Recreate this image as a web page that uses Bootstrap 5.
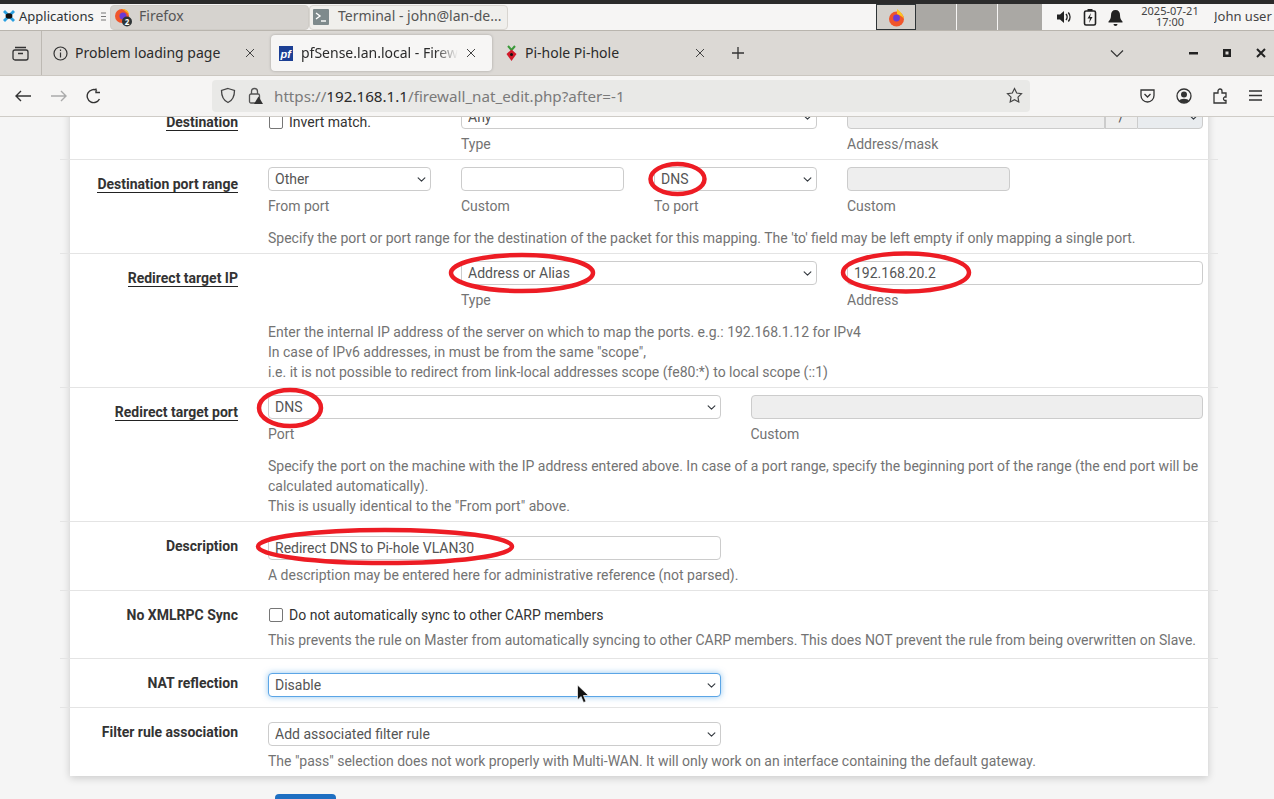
<!DOCTYPE html>
<html lang="en"><head><meta charset="utf-8"><title>pfSense</title>
<link href="https://cdn.jsdelivr.net/npm/bootstrap@5.3.0/dist/css/bootstrap.min.css" rel="stylesheet">
<style>
html,body{height:799px;overflow:hidden;background:#f5f5f5}
body{font-family:Roboto,sans-serif;font-size:14px;line-height:20px;color:#333}
.blackbar{height:4px;background:#2b2b2b}
.panel{height:27px;background:#f6f5f4;border-bottom:1px solid #b9b5ae;font-family:"Noto Sans",sans-serif;font-size:13px;color:#2e3436}
.up{margin-top:-2px}
.appmenu{width:110px;padding-left:2px;gap:3px}
.winbtn{width:199px;height:25px;border-radius:4px;padding-left:3px;gap:5px;color:#555;font-size:14px}
.winbtn.on{background:#d6d3cf;border:1px solid #cfccc7}
.winbtn.off{background:#f0efec;border:1px solid #d8d5d0;gap:9px}
.ws{width:41px;height:26px;background:#aaa8a4;border-right:1px solid #f6f5f4}
.ws.cur{width:40px;background:#d3d0cb;border:1px solid #2e3436}
.clock{font-size:11px;line-height:11px;text-align:center;width:70px;margin-left:12px;color:#444}
.uname{margin-left:9px;white-space:nowrap;width:60px;overflow:hidden;color:#444}
.tabbar{height:45px;background:#dcd9d5;border-bottom:1px solid #cbc7c1;font-family:"Noto Sans",sans-serif;font-size:14px;color:#2b2b2b}
.tabside{width:42px;height:44px;border-right:1px solid #bdb9b3}
.ftab{width:226px;height:36px;padding:0 13px 0 11px;gap:7px;white-space:nowrap}
.ftab.cur{background:#f7f6f5;border-radius:4px;box-shadow:0 0 3px rgba(0,0,0,.25);width:221px;padding:0 16px 0 8px;margin-left:3px;gap:8px}
.ftab.third{width:222px;padding:0 9px 0 13px}
.ftab .tt{flex:1;overflow:hidden}
.fade-tt{-webkit-mask-image:linear-gradient(90deg,#000 85%,transparent);mask-image:linear-gradient(90deg,#000 85%,transparent)}
.navrow{height:41px;padding-bottom:1px;background:#f6f5f4;border-bottom:1px solid #cfccc7}
.urlbox{width:818px;height:32px;background:#e9e9e7;border-radius:4px;font-family:"Noto Sans",sans-serif;font-size:15.2px;color:#7a7a7a;padding:0 7px 0 8px}
.urlbox b{font-weight:400;color:#2b2b2b}
.navl{width:212px;padding-left:14px;gap:18px}
.navr{margin-left:110px;gap:21px}
.stage{height:682px;overflow:hidden}
.sheet{width:1138px;margin:-19px 0 0 70px;padding:0 5px;background:#fff;box-shadow:0 2px 8px rgba(0,0,0,.18)}
.frow{--bs-gutter-x:30px;border-bottom:1px solid #e4e4e4}
.frow.last{border-bottom:0}
.lab{padding-top:14px;text-align:right;font-weight:700;color:#333}
.lab span{border-bottom:1px solid #222}
.lab span.plain{border:0}
.pt7{padding-top:7px}.pt14{padding-top:14px}
.pb5{padding-bottom:5px}
.pb8{padding-bottom:8px}
.ctl.form-select,.ctl.form-control{height:24px;min-height:24px;padding:0 16px 0 6px;font-size:14px;line-height:22px;color:#555;border:1px solid #ccc;border-radius:4px;font-family:Roboto,sans-serif;box-shadow:none}
.ctl.form-select{background-position:right 3px center;background-size:11px 9px}
.ctl.form-control:disabled{background:#eee}
.ctl.focused{border-color:#5ba5e6!important;box-shadow:0 0 6px rgba(102,175,233,.7)!important}
.hint{color:#737373}
.sub{margin-top:5px;color:#737373}
.mt12{margin-top:12px}
.mt5{margin-top:5px}
.pad10{padding-bottom:10px}
.chk.form-check-input{width:14px;height:14px;margin:0 6px 0 1px;border:1.5px solid #767676;border-radius:2px;vertical-align:-2px}
.slash{flex:none;width:32px;height:24px;background:#eee;border:1px solid #ccc;border-width:1px 0;text-align:center;color:#555;line-height:22px;border-left:1px solid #ccc}
.addr{border-radius:4px 0 0 4px!important}
.mask{border-radius:0 4px 4px 0!important;width:66px;flex:none;background-color:#eee}
.savebtn{width:61px;height:20px;margin:18px 0 0 275px;background:#1e6fc2;border-radius:4px 4px 0 0}
.overlay{left:0;top:0;pointer-events:none}
</style></head>
<body>
<div class="blackbar"></div>
<div class="panel d-flex align-items-center">
 <div class="appmenu d-flex align-items-center">
  <svg class="up" width="14" height="14" viewBox="0 0 14 14"><path d="M1 3 3 1 7 5 11 1 13 3 9 7 13 11 11 13 7 9 3 13 1 11 5 7Z" fill="#2a9fe0"/><ellipse cx="7" cy="7" rx="3.4" ry="2.8" fill="#111"/></svg>
  <span class="up">Applications</span>
  <svg class="up ms-1" width="5" height="9" viewBox="0 0 5 9" stroke="#777"><path d="M0 1h5M0 4.500h5M0 8h5"/></svg>
 </div>
 <div class="winbtn on d-flex align-items-center">
  <svg width="20" height="22" viewBox="0 0 20 22"><circle cx="8" cy="10" r="7" fill="#f0552b"/><circle cx="9" cy="10" r="3.500" fill="#6a3bd6"/><path d="M8 3c4 0 7 2 7 6-2-3-4-4-7-6Z" fill="#fdb51f"/><circle cx="13" cy="15.500" r="5" fill="#2e3436"/><text x="13" y="18.500" font-size="8" fill="#fff" text-anchor="middle" font-weight="700">2</text></svg>
  <span class="up">Firefox</span>
 </div>
 <div class="winbtn off d-flex align-items-center">
  <svg width="16" height="16" viewBox="0 0 16 16"><rect width="16" height="16" rx="1" fill="#7e8a8c"/><path d="M3 4 7 7 3 10" fill="none" stroke="#fff" stroke-width="1.400"/><path d="M8 12h5" stroke="#fff" stroke-width="1.400"/></svg>
  <span class="up">Terminal - john@lan-de...</span>
 </div>
 <div class="d-flex" style="margin-left:368px">
  <div class="ws cur d-flex align-items-center justify-content-center"><svg width="17" height="19" viewBox="0 0 17 19"><circle cx="8.500" cy="11" r="7.500" fill="#f0552b"/><circle cx="8.500" cy="10" r="3.400" fill="#6a3bd6"/><path d="M9 1c3 2 6 5 7 10-2-3-5-4-7-5Z" fill="#fdc51f"/></svg></div>
  <div class="ws"></div><div class="ws"></div><div class="ws" style="border:0;width:44px"></div>
 </div>
 <div class="d-flex align-items-center" style="margin-left:14px;gap:11px">
  <svg width="16" height="16" viewBox="0 0 16 16"><path d="M1 5.500h3L8 2v12L4 10.500H1Z" fill="#222"/><path d="M10 5c1.400 1.600 1.400 4.400 0 6M12.300 3.500c2.200 2.600 2.200 6.400 0 9" fill="none" stroke="#222" stroke-width="1.500"/></svg>
  <svg width="14" height="18" viewBox="0 0 14 18"><rect x="1.500" y="3" width="11" height="14" rx="1.500" fill="none" stroke="#222" stroke-width="1.600"/><rect x="4.500" y="1" width="5" height="2" fill="#222"/><path d="M8 5 4.500 10.500H7L6 15l3.500-6H7Z" fill="#222"/></svg>
  <svg width="15" height="17" viewBox="0 0 15 17"><path d="M7.500 1c-3 0-4.500 2-4.500 5 0 3.500-1 5-2.500 6.500v1h14v-1C13 11 12 9.500 12 6c0-3-1.500-5-4.500-5Z" fill="#222"/><path d="M5.500 15a2 2 0 0 0 4 0Z" fill="#222"/></svg>
 </div>
 <div class="clock up">2025-07-21<br>17:00</div>
 <div class="uname up">John user</div>
</div>
<div class="tabbar d-flex align-items-center">
 <div class="tabside d-flex align-items-center justify-content-center"><svg width="17" height="16" viewBox="0 0 17 16" fill="none" stroke="#333" stroke-width="1.300"><rect x="1" y="5" width="15" height="10" rx="2"/><path d="M3 2.500h11M6 8.500h5"/></svg></div>
 <div class="ftab d-flex align-items-center">
  <svg width="15" height="15" viewBox="0 0 15 15" fill="none" stroke="#333" stroke-width="1.200"><circle cx="7.500" cy="7.500" r="6.500"/><path d="M7.500 6.500v5M7.500 3.500v1.500"/></svg>
  <span class="tt">Problem loading page</span>
  <svg width="10" height="10" viewBox="0 0 10 10" stroke="#444"><path d="M1 1l8 8M9 1l-8 8"/></svg>
 </div>
 <div class="ftab cur d-flex align-items-center">
  <svg width="14" height="15" viewBox="0 0 14 15"><rect width="14" height="15" fill="#1c3f94"/><text x="1.500" y="12" font-size="11" font-weight="700" font-style="italic" fill="#fff" font-family="Liberation Sans">pf</text></svg>
  <span class="tt fade-tt">pfSense.lan.local - Firewall: NAT</span>
  <svg width="10" height="10" viewBox="0 0 10 10" stroke="#444"><path d="M1 1l8 8M9 1l-8 8"/></svg>
 </div>
 <div class="ftab third d-flex align-items-center">
  <svg width="13" height="17" viewBox="0 0 13 17"><path d="M6.500 5 3 1M6.500 5 10 1" stroke="#3a9a3a" stroke-width="2"/><path d="M6.500 4.500 11.500 9 6.500 16 1.500 9Z" fill="#d11a2a"/><circle cx="6.500" cy="9.500" r="1.500" fill="#111"/></svg>
  <span class="tt">Pi-hole Pi-hole</span>
  <svg width="10" height="10" viewBox="0 0 10 10" stroke="#444"><path d="M1 1l8 8M9 1l-8 8"/></svg>
 </div>
 <svg style="margin-left:17px" width="14" height="14" viewBox="0 0 14 14" stroke="#333" stroke-width="1.300"><path d="M7 1v12M1 7h12"/></svg>
 <svg style="margin-left:365px" width="14" height="9" viewBox="0 0 14 9" fill="none" stroke="#333" stroke-width="1.200"><path d="M1 1.500 7 7.500 13 1.500"/></svg>
 <svg style="margin-left:65px" width="9" height="3" viewBox="0 0 9 3"><rect width="9" height="2.500" fill="#222"/></svg>
 <svg style="margin-left:25px" width="8" height="8" viewBox="0 0 8 8"><path d="M0 0h8v8H0Z M2.500 2.500v3h3v-3Z" fill="#222" fill-rule="evenodd"/></svg>
 <svg style="margin-left:25px" width="10" height="10" viewBox="0 0 10 10" stroke="#222" stroke-width="2"><path d="M1 1l8 8M9 1l-8 8"/></svg>
</div>
<div class="navrow d-flex align-items-center">
 <div class="navl d-flex align-items-center">
  <svg width="18" height="14" viewBox="0 0 18 14" fill="none" stroke="#333" stroke-width="1.400"><path d="M17 7H2M7 2 2 7l5 5"/></svg>
  <svg width="18" height="14" viewBox="0 0 18 14" fill="none" stroke="#aaa" stroke-width="1.400"><path d="M1 7h15M11 2l5 5-5 5"/></svg>
  <svg width="16" height="16" viewBox="0 0 16 16" fill="none" stroke="#333" stroke-width="1.400"><path d="M13.500 11A6.500 6.500 0 1 1 11 2.500M10 .5v4h4"/></svg>
 </div>
 <div class="urlbox d-flex align-items-center">
  <svg width="16" height="17" viewBox="0 0 16 17" fill="none" stroke="#444" stroke-width="1.300"><path d="M8 1.500 14.500 3.500c0 6-2 10-6.500 12C3.500 13.500 1.500 9.500 1.500 3.500Z"/></svg>
  <svg style="margin-left:12px" width="15" height="17" viewBox="0 0 15 17"><rect x="1.500" y="7" width="10" height="9" rx="1.500" fill="none" stroke="#555" stroke-width="1.300"/><path d="M3.500 7V4.500a3 3 0 0 1 6 0V7" fill="none" stroke="#555" stroke-width="1.300"/><path d="M10.500 9.500 15 17H6Z" fill="#333"/></svg>
  <span class="flex-grow-1" style="margin-left:11px">https://<b>192.168.1.1</b>/firewall_nat_edit.php?after=-1</span>
  <svg width="17" height="17" viewBox="0 0 17 17" fill="none" stroke="#444" stroke-width="1.200"><path d="M8.500 1.500 10.700 6l4.800.7-3.500 3.400.8 4.900-4.300-2.300L4.200 15l.8-4.900L1.500 6.700 6.300 6Z"/></svg>
 </div>
 <div class="navr d-flex align-items-center">
  <svg width="15" height="14" viewBox="0 0 15 14" fill="none" stroke="#333" stroke-width="1.300"><path d="M1 1h13v5.500a6.500 6.500 0 0 1-13 0Z"/><path d="M4.500 5 7.500 8l3-3"/></svg>
  <svg width="16" height="16" viewBox="0 0 16 16"><circle cx="8" cy="8" r="7" fill="none" stroke="#333" stroke-width="1.300"/><circle cx="8" cy="6.500" r="3" fill="#333"/><path d="M3 13c1-3 9-3 10 0a7 7 0 0 1-10 0Z" fill="#333"/></svg>
  <svg width="15" height="16" viewBox="0 0 15 16" fill="none" stroke="#333" stroke-width="1.300"><path d="M1 5h4V3a2 2 0 0 1 4 0v2h4v4h-1.500a2 2 0 0 0 0 3.500H13V15H1Z" /></svg>
  <svg width="13" height="11" viewBox="0 0 13 11" stroke="#333" stroke-width="1.300"><path d="M0 1h13M0 5.500h13M0 10h13"/></svg>
 </div>
</div>
<div class="stage position-relative">
 <div class="sheet">
  <div class="row frow">
   <div class="col-2 lab"><span>Destination</span></div>
   <div class="col-2 lab text-start fw-normal"><input class="chk form-check-input" type="checkbox"><span class="plain">Invert match.</span></div>
   <div class="col-4 pt7 pb5"><select class="ctl form-select"><option>Any</option></select><div class="sub">Type</div></div>
   <div class="col-4 pt7 pb5"><div class="d-flex"><input class="ctl form-control addr" disabled><div class="slash">/</div><select class="ctl form-select mask" disabled></select></div><div class="sub">Address/mask</div></div>
  </div>
  <div class="row frow">
   <div class="col-2 lab"><span>Destination port range</span></div>
   <div class="col-2 pt7"><select class="ctl form-select"><option>Other</option></select><div class="sub">From port</div></div>
   <div class="col-2 pt7"><input class="ctl form-control"><div class="sub">Custom</div></div>
   <div class="col-2 pt7"><select class="ctl form-select"><option>DNS</option></select><div class="sub">To port</div></div>
   <div class="col-2 pt7"><input class="ctl form-control" disabled><div class="sub">Custom</div></div>
   <div class="col-10 offset-2 hint mt12 pb5">Specify the port or port range for the destination of the packet for this mapping. The 'to' field may be left empty if only mapping a single port.</div>
  </div>
  <div class="row frow">
   <div class="col-2 lab"><span>Redirect target IP</span></div>
   <div class="col-2"></div>
   <div class="col-4 pt7"><select class="ctl form-select"><option>Address or Alias</option></select><div class="sub">Type</div></div>
   <div class="col-4 pt7"><input class="ctl form-control" value="192.168.20.2"><div class="sub">Address</div></div>
   <div class="col-10 offset-2 hint mt12 pb5">Enter the internal IP address of the server on which to map the ports. e.g.: 192.168.1.12 for IPv4<br>In case of IPv6 addresses, in must be from the same "scope",<br>i.e. it is not possible to redirect from link-local addresses scope (fe80:*) to local scope (::1)</div>
  </div>
  <div class="row frow">
   <div class="col-2 lab"><span>Redirect target port</span></div>
   <div class="col-5 pt7"><select class="ctl form-select"><option>DNS</option></select><div class="sub">Port</div></div>
   <div class="col-5 pt7"><input class="ctl form-control" disabled><div class="sub">Custom</div></div>
   <div class="col-10 offset-2 hint mt12 pb5">Specify the port on the machine with the IP address entered above. In case of a port range, specify the beginning port of the range (the end port will be calculated automatically).<br>This is usually identical to the "From port" above.</div>
  </div>
  <div class="row frow">
   <div class="col-2 lab"><span class="plain">Description</span></div>
   <div class="col-5 pt14"><input class="ctl form-control" value="Redirect DNS to Pi-hole VLAN30"></div>
   <div class="col-10 offset-2 hint mt5 pb5">A description may be entered here for administrative reference (not parsed).</div>
  </div>
  <div class="row frow">
   <div class="col-2 lab"><span class="plain">No XMLRPC Sync</span></div>
   <div class="col-10 pt14"><input class="chk form-check-input" type="checkbox"><span>Do not automatically sync to other CARP members</span></div>
   <div class="col-10 offset-2 hint mt5 pb8">This prevents the rule on Master from automatically syncing to other CARP members. This does NOT prevent the rule from being overwritten on Slave.</div>
  </div>
  <div class="row frow">
   <div class="col-2 lab"><span class="plain">NAT reflection</span></div>
   <div class="col-5 pt14 pad10"><select class="ctl form-select focused"><option>Disable</option></select></div>
  </div>
  <div class="row frow last">
   <div class="col-2 lab"><span class="plain">Filter rule association</span></div>
   <div class="col-5 pt14"><select class="ctl form-select"><option>Add associated filter rule</option></select></div>
   <div class="col-10 offset-2 hint mt5 pb5">The "pass" selection does not work properly with Multi-WAN. It will only work on an interface containing the default gateway.</div>
  </div>
 </div>
 <div class="savebtn"></div>
 <svg class="overlay position-absolute" width="1274" height="682" viewBox="0 117 1274 682" fill="none" stroke="#ed1c24" stroke-width="4.500">
  <ellipse cx="677.500" cy="179" rx="27" ry="15"/>
  <ellipse cx="522" cy="273" rx="71" ry="18"/>
  <ellipse cx="906" cy="272.500" rx="63" ry="19"/>
  <ellipse cx="290" cy="408" rx="31" ry="18"/>
  <ellipse cx="385" cy="546.500" rx="127" ry="16.500"/>
  <path d="M577.500 685v15l3.500-3.500 2.500 6 2.500-1-2.500-6h5Z" fill="#111" stroke="#fff" stroke-width=".7"/>
 </svg>
</div>
</body></html>
